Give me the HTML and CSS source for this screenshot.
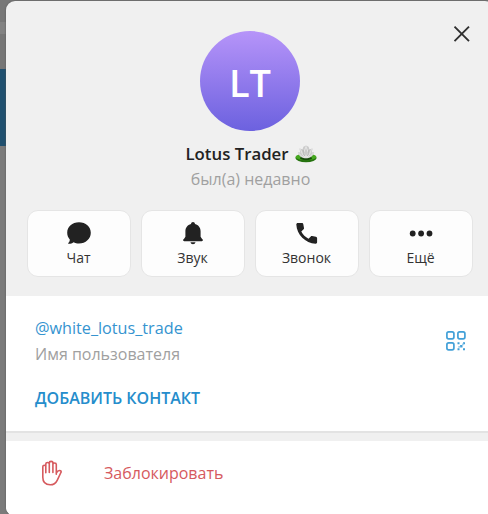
FILE: index.html
```html
<!DOCTYPE html>
<html lang="ru">
<head>
<meta charset="utf-8">
<title>Lotus Trader</title>
<link rel="stylesheet" href="styles.css">
</head>
<body>
<div class="backdrop">
  <main class="card">
    <button class="close" aria-label="Закрыть"><svg width="18" height="18" viewBox="0 0 18 18"><path d="M1.500 1.700 16 16.200M16 1.700 1.500 16.200" fill="none" stroke="#303030" stroke-width="1.9"/></svg></button>
    <header class="profile">
      <div class="avatar"><span>LT</span></div>
      <h1 class="name"><span class="name-text">Lotus Trader</span>
        <svg class="lotus" width="22" height="18" viewBox="0 0 22 18">
          <ellipse cx="11" cy="13" rx="10.6" ry="4.200" fill="#25720f"/>
          <ellipse cx="11" cy="12" rx="10.500" ry="3.200" fill="#46a91f"/>
          <ellipse cx="11" cy="13.200" rx="6" ry="2" fill="#174b0b"/>
          <path d="M11 13.300C6 13.300 3.500 10.500 3 7.200l2.300.3-.9-4 3.200.8.800-2.600L11 .5l2.600 1.200.8 2.600 3.200-.8-.9 4 2.300-.3C18.500 10.500 16 13.300 11 13.300Z" fill="#cacaca"/>
          <path d="M11 1.500 8.800 7.500 11 12.500l2.200-5ZM5.500 4.200l2 5.300 3 3M16.500 4.200l-2 5.300-3 3M3.300 7.800l3.500 3.600 3.500 1.300M18.700 7.800l-3.500 3.600-3.500 1.300" fill="none" stroke="#e8e8e8" stroke-width=".9"/>
          <path d="m8 5 1.500 6M14 5l-1.500 6" stroke="#aaa" stroke-width=".7"/>
        </svg>
      </h1>
      <p class="status">был(а) недавно</p>
      <nav class="actions">
        <button class="action"><svg width="26" height="26" viewBox="0 0 26 26"><path d="M13 2.200c6.700 0 11.800 4.600 11.800 10.500S19.700 23.500 13 23.500c-2 0-3.900-.5-5.500-1.300-1.300 1-3 1.700-4.900 1.600-.5 0-.6-.5-.3-.8 1-.9 1.500-2.100 1.500-3.500C2.200 17.700 1.200 15.500 1.200 12.700 1.200 6.800 6.300 2.200 13 2.200Z"/></svg><span>Чат</span></button>
        <button class="action"><svg width="26" height="26" viewBox="0 0 26 26"><path d="M13 2c1.100 0 1.900.8 2 2 3.600.9 5.600 3.700 5.600 7.400v5.400l1.500 2.100c.6.300.8.700.8 1.200 0 .7-.4 1.100-1.100 1.100H4.200c-.7 0-1.100-.4-1.100-1.100 0-.5.2-.9.8-1.200l1.500-2.100v-5.400C5.400 7.700 7.400 4.900 11 4c.1-1.200.9-2 2-2ZM10.500 22.300h5c-.2 1.200-1.200 2-2.500 2s-2.300-.8-2.500-2Z"/></svg><span>Звук</span></button>
        <button class="action"><svg width="26" height="26" viewBox="0 0 26 26"><path d="M3.800 3h4.100c.7 0 1.300.5 1.400 1.200l.7 3.800c.1.500 0 1-.4 1.300L7.300 11.500c1.600 3.100 4.100 5.600 7.200 7.200l2.300-2.300c.4-.4.8-.5 1.300-.4l3.800.7c.7.100 1.200.7 1.200 1.400v4.200c0 .8-.7 1.500-1.500 1.400C11.300 23.200 2.800 14.700 2.300 4.500 2.300 3.700 3 3 3.800 3Z"/></svg><span>Звонок</span></button>
        <button class="action"><svg width="26" height="26" viewBox="0 0 26 26"><circle cx="4.700" cy="13.500" r="2.900"/><circle cx="13.100" cy="13.500" r="2.900"/><circle cx="21.500" cy="13.500" r="2.900"/></svg><span>Ещё</span></button>
      </nav>
    </header>
    <section class="info">
      <div class="user-row">
        <div>
          <a class="handle">@white_lotus_trade</a>
          <p class="caption">Имя пользователя</p>
        </div>
        <svg class="qr" width="20" height="20" viewBox="0 0 20 20">
          <g fill="none" stroke="#42a0d8" stroke-width="1.700"><rect x=".9" y=".9" width="7" height="7" rx="1.800"/><rect x="11.900" y=".9" width="7" height="7" rx="1.800"/><rect x=".9" y="11.900" width="7" height="7" rx="1.800"/></g>
          <path fill="#42a0d8" d="M11.500 11.300h2v2h-2ZM17 11.300h2v2h-2ZM14.100 14.100h2.400v2.400h-2.400ZM11.500 17.200h2v2h-2ZM17 17.200h2v2h-2Z"/>
          <path fill="#9ccdeb" d="M12.300 14.900h1.800v1.800h-1.800ZM16 12.500h1.800v1.800H16Z"/>
        </svg>
      </div>
      <a class="add">ДОБАВИТЬ КОНТАКТ</a>
    </section>
    <section class="block-row">
      <svg width="22" height="26" viewBox="0 0 22 26"><path d="M1.800 14V6.700c0-2 3-2 3 0V4c0-2 3.500-2 3.500 0V3c0-2.200 3.600-2.200 3.600 0v1.500c0-2 3.400-2 3.400 0V13c1-1.700 2.500-3 4.200-2.200.8.400.8 1 .4 1.700l-3.700 7.800c-1.500 3.100-3.600 4.500-7 4.500-4.800 0-7.400-2.800-7.400-7.500ZM4.800 6v6.800M8.300 4v8.500M11.900 4v8.500M15.300 11v3.300" fill="none" stroke="#d65a5e" stroke-width="1.600" stroke-linecap="round" stroke-linejoin="round"/></svg>
      <span class="block-text">Заблокировать</span>
    </section>
  </main>
</div>
</body>
</html>
```
FILE: styles.css
```css
* { box-sizing: border-box; }
body, h1, p { margin: 0; }
body {
  width: 488px;
  height: 514px;
  overflow: hidden;
  font-family: "Open Sans", "Noto Sans", sans-serif;
  font-size: 16px;
}
button { font: inherit; padding: 0; border: 0; }
svg { display: block; flex: none; }
.backdrop {
  width: 488px;
  height: 514px;
  overflow: hidden;
  padding: 1px 0 0 6px;
  background: linear-gradient(#777 0 22px, #828282 22px 34px, #767676 34px 69px, #20506f 69px 146px, #7b7b7b 146px);
}
.card {
  position: relative;
  width: 488px;
  height: 515px;
  border-radius: 9px;
  overflow: hidden;
  background: #f0f0f0;
  box-shadow: 0 0 2px #555;
}
.close {
  position: absolute;
  left: 447px;
  top: 24px;
  background: none;
}
.profile {
  display: flex;
  flex-direction: column;
  align-items: center;
  height: 295px;
  padding: 30px 1px 0 0;
}
.avatar {
  display: flex;
  align-items: center;
  justify-content: center;
  width: 100px;
  height: 100px;
  margin-left: 1px;
  border-radius: 50%;
  background: linear-gradient(#b694f9, #6c61df);
  color: #fff;
  font-size: 38px;
  font-weight: 600;
}
.avatar span { margin-top: 2px; }
.name {
  display: flex;
  align-items: center;
  gap: 6px;
  height: 22px;
  margin-top: 12px;
  margin-left: 3px;
  color: #222;
  font-size: 16.800px;
  font-weight: 600;
  line-height: 22px;
  white-space: nowrap;
}
.status {
  height: 22px;
  margin-top: 3px;
  margin-left: 2px;
  color: #a0a0a0;
  font-size: 16px;
  line-height: 22px;
}
.actions {
  display: flex;
  gap: 10px;
  margin-top: 20px;
}
.action {
  display: flex;
  flex-direction: column;
  align-items: center;
  width: 104px;
  height: 67px;
  padding-top: 9px;
  border: 1px solid #e5e5e5;
  border-radius: 11px;
  background: #fdfdfd;
  color: #333;
  font-size: 14px;
  line-height: 20px;
}
.action svg { fill: #222; }
.action span { margin-top: 2px; }
.info {
  position: relative;
  height: 135px;
  padding: 21px 28px 0 29px;
  background: #fff;
  box-shadow: 0 2px #e3e3e3;
}
.user-row { display: flex; justify-content: space-between; }
.handle {
  display: block;
  color: #3594d0;
  font-size: 16.200px;
  line-height: 22px;
}
.caption {
  margin-top: 4px;
  color: #a0a0a0;
  font-size: 16px;
  line-height: 22px;
}
.qr { margin-top: 14px; }
.add {
  display: block;
  margin-top: 22px;
  color: #258dcc;
  font-size: 16px;
  font-weight: 600;
  line-height: 22px;
}
.block-row {
  display: flex;
  align-items: center;
  gap: 41px;
  height: 74px;
  margin-top: 10px;
  padding: 0 0 10px 35px;
  background: #fff;
}
.block-text { color: #d65a5e; font-size: 16px; }
```
